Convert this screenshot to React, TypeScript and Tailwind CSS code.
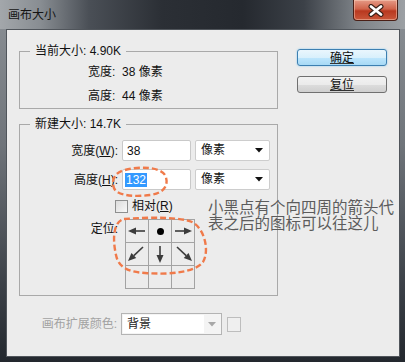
import type { ReactNode } from 'react'

const FONT = "font-['Liberation_Sans','Noto_Sans_CJK_SC',sans-serif]"

type Pt = [number, number]

function Arrow({ from, to }: { from: Pt; to: Pt }) {
  const [x1, y1] = from
  const [x2, y2] = to
  const len = Math.hypot(x2 - x1, y2 - y1)
  const ux = (x2 - x1) / len
  const uy = (y2 - y1) / len
  const bx = x2 - ux * 8
  const by = y2 - uy * 8
  const head = `${x2},${y2} ${bx - uy * 3.5},${by + ux * 3.5} ${bx + uy * 3.5},${by - ux * 3.5}`
  return (
    <svg width="22" height="22" viewBox="0 0 22 22">
      <line x1={x1} y1={y1} x2={bx} y2={by} stroke="#3c3c3c" strokeWidth="1.6" />
      <polygon points={head} fill="#3c3c3c" />
    </svg>
  )
}

function Caret({ color = '#111' }: { color?: string }) {
  return (
    <svg width="8" height="5" viewBox="0 0 8 5">
      <polygon points="0,0 8,0 4,4.5" fill={color} />
    </svg>
  )
}

function Group({ title, children, className }: { title: string; children: ReactNode; className?: string }) {
  return (
    <fieldset className={`border border-[#a9a9a9] ${className ?? ''}`}>
      <legend className="ml-[10px] px-[5px] text-[12px] leading-[16px] text-[#111]">{title}</legend>
      {children}
    </fieldset>
  )
}

function Select({ value }: { value: string }) {
  return (
    <div className="ml-[4px] flex h-[21px] w-[75px] items-center justify-between rounded-[2px] border border-[#cdcdcd] bg-white pl-[5px] pr-[6px]">
      <span className="text-[12px] leading-[15px] text-[#111]">{value}</span>
      <Caret />
    </div>
  )
}

const cells: (ReactNode | null)[] = [
  <Arrow key="l" from={[19, 11]} to={[2, 11]} />,
  <div key="d" className="h-[7px] w-[7px] rounded-full bg-black" />,
  <Arrow key="r" from={[3, 11]} to={[20, 11]} />,
  <Arrow key="dl" from={[17, 4]} to={[2, 18]} />,
  <Arrow key="dn" from={[11, 3]} to={[11, 20]} />,
  <Arrow key="dr" from={[5, 4]} to={[20, 18]} />,
  null,
  null,
  null,
]

export default function App() {
  return (
    <div
      className={`${FONT} relative flex h-[362px] w-[405px] flex-col overflow-hidden bg-[linear-gradient(to_bottom,#8c9196_0%,#6f747a_40%,#3a3f46_80%,#23282e_100%)]`}
    >
      {/* title bar */}
      <div className="flex h-[29px] items-start justify-between bg-[linear-gradient(to_right,#a3a7ab_0%,#888d92_10%,#4a4f56_22%,#2b2f35_40%,#25292f_60%,#3c4148_75%,#7d8287_88%,#9ca0a4_100%)]">
        <span className="ml-[8px] mt-[8px] text-[12px] leading-[14px] text-[#141414]">画布大小</span>
        <div className="mr-[7px] flex h-[21px] w-[45px] items-center justify-center rounded-b-[4px] border border-t-0 border-[#4a1f16] bg-[linear-gradient(to_bottom,#e59a86_0%,#d0634a_45%,#b8381f_55%,#c9573a_100%)] shadow-[inset_0_0_0_1px_rgba(255,220,200,0.45)]">
          <svg width="18" height="13" viewBox="0 0 18 13">
            <path d="M4 2.5 L14 10.5 M14 2.5 L4 10.5" stroke="#3a2018" strokeWidth="5" strokeLinecap="round" />
            <path d="M4 2.5 L14 10.5 M14 2.5 L4 10.5" stroke="#fff" strokeWidth="2.8" strokeLinecap="round" />
          </svg>
        </div>
      </div>

      {/* client area */}
      <div className="ml-[6px] mr-[5px] flex h-[328px] border border-[#50555b] bg-[#ececec] pl-[12px]">
        <div className="flex w-[259px] flex-col pt-[13px]">
          <Group title="当前大小: 4.90K" className="pb-[4px]">
            <div className="mt-[5px] flex flex-col gap-[8px] pl-[68px] text-[12px] leading-[16px] text-[#111]">
              <span>宽度:&nbsp; 38 像素</span>
              <span>高度:&nbsp; 44 像素</span>
            </div>
          </Group>

          <Group title="新建大小: 14.7K" className="mt-[7px] pb-[6px]">
            <div className="mt-[8px] flex items-center">
              <span className="w-[98px] text-right text-[12px] leading-[16px] text-[#111]">
                宽度(<span className="underline">W</span>):
              </span>
              <div className="ml-[4px] flex h-[21px] w-[69px] items-center rounded-[2px] border border-[#c9c9c9] bg-white pl-[4px] text-[12px] text-[#111]">
                38
              </div>
              <Select value="像素" />
            </div>
            <div className="mt-[8px] flex items-center">
              <span className="w-[98px] text-right text-[12px] leading-[16px] text-[#111]">
                高度(<span className="underline">H</span>):
              </span>
              <div className="ml-[4px] flex h-[21px] w-[69px] items-center rounded-[2px] border border-[#c9c9c9] bg-white pl-[2px]">
                <span className="bg-[#3399ff] px-[1px] text-[12px] leading-[14px] text-white">132</span>
              </div>
              <Select value="像素" />
            </div>
            <div className="ml-[95px] mt-[9px] flex items-center gap-[4px]">
              <div className="h-[13px] w-[13px] border border-[#8e8f8f] bg-[linear-gradient(135deg,#dcdcdc,#f8f8f8)]" />
              <span className="text-[12px] leading-[14px] text-[#111]">
                相对(<span className="underline">R</span>)
              </span>
            </div>
            <div className="mt-[6px] flex items-start">
              <span className="mt-[2px] w-[98px] text-right text-[12px] leading-[16px] text-[#111]">定位:</span>
              <div className="ml-[7px] grid w-[70px] grid-cols-3 border-l border-t border-[#a3a3a3]">
                {cells.map((c, i) => (
                  <div key={i} className="flex h-[23px] items-center justify-center border-b border-r border-[#a3a3a3]">
                    {c}
                  </div>
                ))}
              </div>
            </div>
          </Group>

          <div className="mt-[17px] flex items-center">
            <span className="w-[98px] text-right text-[12px] leading-[16px] text-[#a2a2a2]">画布扩展颜色:</span>
            <div className="ml-[4px] flex h-[22px] w-[101px] items-center border border-[#b4b4b4] bg-[#f4f4f4] p-[1px]">
              <div className="flex h-full w-[81px] items-center bg-white pl-[4px] text-[12px] text-[#222]">背景</div>
              <div className="flex flex-1 items-center justify-center">
                <Caret color="#a8a8a8" />
              </div>
            </div>
            <div className="ml-[5px] h-[15px] w-[14px] border border-[#bdbdbd] bg-[#efefef]" />
          </div>
        </div>

        <div className="ml-[19px] flex w-[90px] flex-col gap-[10px] pt-[19px]">
          <div className="flex h-[17px] items-center justify-center rounded-[3px] border border-[#3c7fb1] bg-[linear-gradient(to_bottom,#eaf6fd_0%,#d9f0fc_50%,#bee6fd_51%,#a7d9f5_100%)] shadow-[0_0_2px_#7ec6f0] text-[12px] leading-[14px] text-[#111]">
            <span className="underline decoration-[#333] underline-offset-[1px]">确定</span>
          </div>
          <div className="flex h-[17px] items-center justify-center rounded-[3px] border border-[#707070] bg-[linear-gradient(to_bottom,#f2f2f2_0%,#ebebeb_50%,#dddddd_51%,#cfcfcf_100%)] text-[12px] leading-[14px] text-[#111]">
            <span className="underline decoration-[#333] underline-offset-[1px]">复位</span>
          </div>
        </div>
      </div>

      {/* annotation overlay */}
      <div className="pointer-events-none absolute left-[208px] top-[200px] text-[15.5px] leading-[16px] text-[#5c5c5c]">
        小黑点有个向四周的箭头代
        <br />
        表之后的图标可以往这儿
      </div>
      <svg className="pointer-events-none absolute left-0 top-0" width="405" height="362" viewBox="0 0 405 362">
        <g fill="none" stroke="#f07a4a" strokeWidth="2.4" strokeDasharray="6 3">
          <path d="M125 170 C140 166,160 167,165 175 C169 183,166 193,150 195 C135 197,117 196,114 188 C111 180,115 172,125 170 Z" />
          <path d="M124 219 C150 217,180 217,192 222 C204 228,210 250,203 262 C196 272,170 275,145 273 C125 272,118 265,116 255 C113 242,112 222,124 219 Z" />
        </g>
      </svg>
    </div>
  )
}
